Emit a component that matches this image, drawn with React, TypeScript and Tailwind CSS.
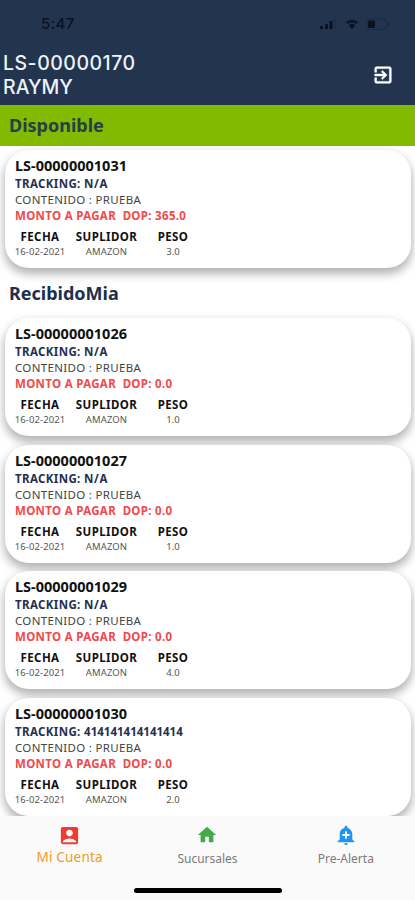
import React from "react";
import { MdAccountBox, MdAddAlert, MdHome } from "react-icons/md";

type Shipment = {
  id: string;
  tracking: string;
  amount: string;
  weight: string;
};

const available: Shipment[] = [
  { id: "LS-00000001031", tracking: "N/A", amount: "365.0", weight: "3.0" },
];

const received: Shipment[] = [
  { id: "LS-00000001026", tracking: "N/A", amount: "0.0", weight: "1.0" },
  { id: "LS-00000001027", tracking: "N/A", amount: "0.0", weight: "1.0" },
  { id: "LS-00000001029", tracking: "N/A", amount: "0.0", weight: "4.0" },
  { id: "LS-00000001030", tracking: "414141414141414", amount: "0.0", weight: "2.0" },
];

function Column({ label, value, className }: { label: string; value: string; className: string }) {
  return (
    <div className={`flex flex-col items-center ${className}`}>
      <span className="text-[11.5px] leading-[15px] font-bold tracking-[0.4px] text-[#111]">{label}</span>
      <span className="text-[9.5px] leading-[15px] tracking-[0.1px] text-[#555]">{value}</span>
    </div>
  );
}

function Card({ item }: { item: Shipment }) {
  return (
    <div className="mr-1 ml-[5px] h-[118px] shrink-0 rounded-[24px] bg-white pt-[6px] pl-[10px] whitespace-pre shadow-[0_5px_10px_1px_rgba(0,0,0,0.3)]">
      <div className="text-[14.5px] leading-[19px] font-bold text-[#111]">{item.id}</div>
      <div className="mt-px text-[11.5px] leading-4 font-bold text-[#23304f]">
        <span className="tracking-[0.38px]">TRACKING: </span>
        <span className={item.tracking === "N/A" ? "tracking-[0.6px]" : ""}>{item.tracking}</span>
      </div>
      <div className="text-[11.5px] leading-4 tracking-[0.32px] text-[#444]">CONTENIDO : PRUEBA</div>
      <div className="text-[11.5px] leading-4 font-bold tracking-[0.32px] text-[#f2494b]">{`MONTO A PAGAR  DOP: ${item.amount}`}</div>
      <div className="mt-[5.4px] flex">
        <Column label="FECHA" value="16-02-2021" className="w-[50px]" />
        <Column label="SUPLIDOR" value="AMAZON" className="ml-2 w-[67px]" />
        <Column label="PESO" value={item.weight} className="ml-4 w-[34px]" />
      </div>
    </div>
  );
}

function StatusBar() {
  return (
    <div className="flex h-[47px] items-center justify-between pr-[26px] pl-[41px] text-[#0a1120]">
      <span className="font-['Inter',sans-serif] text-[15px] leading-5 font-medium tracking-[0.4px]">5:47</span>
      <svg width="76" height="16" viewBox="0 0 76 16" className="mr-[-1px]">
        <g fill="currentColor">
          <rect x="6" y="10" width="3" height="3" rx=".6" />
          <rect x="11" y="8" width="3" height="5" rx=".6" />
          <rect x="15.5" y="5" width="3" height="8" rx=".6" />
          <rect x="20" y="3" width="2.5" height="10" rx=".6" opacity=".15" />
          <path d="M32 6.2a9 9 0 0 1 12 0L42.5 8a6.7 6.7 0 0 0-9 0zM34.7 9.2a5 5 0 0 1 6.6 0L38 13z" />
          <rect x="54" y="4.5" width="7" height="7.5" rx="1" />
        </g>
        <rect x="52.5" y="3" width="20" height="10.5" rx="3" fill="none" stroke="currentColor" opacity=".3" />
        <path d="M74 6.5v3.5c2-.8 2-2.7 0-3.5z" fill="currentColor" opacity=".35" />
      </svg>
    </div>
  );
}

function ExitIcon() {
  return (
    <svg viewBox="0 0 24 24" className="mt-[13px] size-[22px] fill-white stroke-white stroke-[0.6]">
      <path d="M10.09 15.59L11.5 17l5-5-5-5-1.41 1.41L12.67 11H3v2h9.67l-2.58 2.59zM19 3H5a2 2 0 0 0-2 2v4h2V5h14v14H5v-4H3v4a2 2 0 0 0 2 2h14c1.1 0 2-.9 2-2V5c0-1.1-.9-2-2-2z" />
    </svg>
  );
}

export default function App() {
  return (
    <div className="flex h-[900px] w-[415px] flex-col overflow-hidden bg-white font-['Noto_Sans',sans-serif]">
      <header className="h-[105px] shrink-0 bg-[#23344f]">
        <StatusBar />
        <div className="flex items-start justify-between pt-1 pr-[21px] pl-[3px]">
          <div className="font-['Inter',sans-serif] text-[19.5px] leading-6 font-medium text-[#edf3fb]">
            <div className="tracking-[0.5px]">LS-00000170</div>
            <div>RAYMY</div>
          </div>
          <ExitIcon />
        </div>
      </header>
      <main className="flex min-h-0 flex-1 flex-col overflow-hidden">
        <h2 className="relative z-10 h-[41px] shrink-0 bg-[#82b901] pl-[9px] text-[18px] leading-[41px] font-bold text-[#24404a]">
          Disponible
        </h2>
        <div className="flex flex-col pt-1">
          {available.map((item) => (
            <Card key={item.id} item={item} />
          ))}
        </div>
        <h2 className="h-[50px] shrink-0 pl-[9px] text-[18px] leading-[50px] font-bold text-[#202d4d]">RecibidoMia</h2>
        <div className="flex flex-col gap-[8.5px]">
          {received.map((item) => (
            <Card key={item.id} item={item} />
          ))}
        </div>
      </main>
      <nav className="relative z-10 flex h-[84px] shrink-0 flex-col items-center bg-[#fafafa]">
        <div className="flex h-[72px] w-full">
          <div className="flex flex-1 flex-col items-center pt-2">
            <MdAccountBox className="size-[23px] text-[#f03a34]" />
            <span className="pl-px text-[13.5px] leading-5 tracking-[0.2px] text-[#f39a22]">Mi Cuenta</span>
          </div>
          <div className="flex flex-1 flex-col items-center pt-2">
            <MdHome className="size-[22px] text-[#43a94a]" />
            <span className="mt-[3px] text-[12px] leading-5 text-[#7b7b7b]">Sucursales</span>
          </div>
          <div className="flex flex-1 flex-col items-center pt-2">
            <MdAddAlert className="size-[22px] text-[#2094ee]" />
            <span className="mt-[3px] text-[12px] leading-5 text-[#7b7b7b]">Pre-Alerta</span>
          </div>
        </div>
        <div className="h-[5px] w-[148px] rounded-full bg-black" />
      </nav>
    </div>
  );
}
